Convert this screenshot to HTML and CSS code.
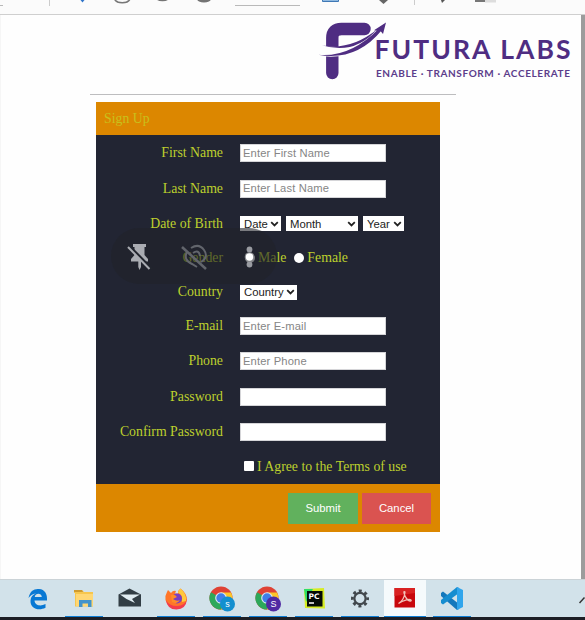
FILE: index.html
```html
<!DOCTYPE html>
<html lang="en">
<head>
<meta charset="utf-8">
<title>Sign Up</title>
<link rel="stylesheet" href="styles.css">
</head>
<body>
<svg width="0" height="0" class="defs" aria-hidden="true">
  <symbol id="chev" viewBox="0 0 9 6"><path d="M1.2 1.2 4.5 4.4 7.8 1.2" fill="none" stroke="#222" stroke-width="1.8"/></symbol>
  <symbol id="chrome" viewBox="0 0 26 26">
    <circle cx="12" cy="12" r="11.5" fill="#df4234"/>
    <path d="M2 6.2A11.5 11.5 0 0 0 12 23.5L17 15 12 12Z" fill="#2da85a"/>
    <path d="M12 6.4H22A11.5 11.5 0 0 1 12 23.5L17 14.5Z" fill="#fcc629"/>
    <circle cx="12" cy="12" r="5.8" fill="#dfe9f3"/><circle cx="12" cy="12" r="4.7" fill="#3f7fe8"/>
  </symbol>
</svg>
<header class="toolbar">
  <svg width="585" height="14" viewBox="0 0 585 14">
    <path d="M0 5.500H3M235 5.500H300" stroke="#b9b9b9"/>
    <path d="M49.500 0V6M414.500 0V5" stroke="#ccc"/>
    <path d="M80.500 0H84.500L82.500 2.500Z" fill="#2f74c9"/>
    <path d="M114.500-1A8 5 0 0 0 130-1" fill="none" stroke="#777" stroke-width="1.500"/>
    <path d="M156-1A7 3.500 0 0 0 169-1ZM197-1A7 3.500 0 0 0 211-1Z" fill="#747474"/>
    <path d="M322.500-1V1.500H338.500V-1" fill="#8fb9e0" stroke="#3f78b5"/>
    <path d="M379 0H388L383.500 4Z" fill="#666"/>
    <path d="M441 0H445L442 3Z" fill="#555"/>
    <path d="M475 0H485V2H475Z" fill="#777"/><path d="M485 0H496V2.500H485Z" fill="#ddd"/>
  </svg>
</header>
<main class="page">
  <div class="paper">
    <svg class="logo" width="270" height="66" viewBox="310 19 270 66" role="img" aria-label="Futura Labs">
      <path d="M332.300 73V38Q332.300 29 341.500 29H364.500" fill="none" stroke="#4f2d82" stroke-width="12.400" stroke-linecap="round"/>
      <path d="M320 44.500Q350 54 378 29L382 31Q356 62 318 55.500Z" fill="#fefefe"/>
      <path d="M322 45.200Q350 51 377 29.500 354 55.500 322 45.200Z" fill="#4f2d82"/>
      <path d="M318 54.800Q350 58 379 28.500L381.500 30.500Q356 61.500 318 54.800Z" fill="#4f2d82"/>
      <path d="M386 22.500 374 30.300 378.500 31 379.500 30 380.500 31 383 34Z" fill="#4f2d82"/>
      <text class="brand" x="374.500" y="59" textLength="196" lengthAdjust="spacing">FUTURA LABS</text>
      <text class="motto" x="376" y="77.300" textLength="194" lengthAdjust="spacing">ENABLE · TRANSFORM · ACCELERATE</text>
    </svg>
    <div class="rule"></div>
    <form class="signup">
      <div class="head">Sign Up</div>
      <div class="fields">
        <label>First Name</label><div><input type="text" placeholder="Enter First Name"></div>
        <label>Last Name</label><div><input type="text" placeholder="Enter Last Name"></div>
        <label>Date of Birth</label>
        <div class="dob">
          <span class="select date">Date<svg><use href="#chev"/></svg></span>
          <span class="select month">Month<svg><use href="#chev"/></svg></span>
          <span class="select year">Year<svg><use href="#chev"/></svg></span>
        </div>
        <label>Gender</label>
        <div class="gender"><i class="radio"></i><span class="male">Male</span><i class="radio"></i><span>Female</span></div>
        <label>Country</label><div><span class="select country">Country<svg><use href="#chev"/></svg></span></div>
        <label>E-mail</label><div><input type="text" placeholder="Enter E-mail"></div>
        <label>Phone</label><div><input type="text" placeholder="Enter Phone"></div>
        <label>Password</label><div><input type="password"></div>
        <label>Confirm Password</label><div><input type="password"></div>
        <span></span><div class="terms"><i class="check"></i><span>I Agree to the Terms of use</span></div>
      </div>
      <div class="actions"><button type="button" class="submit">Submit</button><button type="button" class="cancel">Cancel</button></div>
      <div class="overlay">
        <svg width="166" height="56" viewBox="111 228 166 56">
          <path d="M133 244H146V247H144.500V255L148 259V261.500H141V267L139.500 270 138.300 267V261.500H131V259L134.500 255V247H133Z" fill="#aaacb2"/>
          <path d="M129 245.500 152 269" stroke="#22252e" stroke-width="2.500"/>
          <path d="M128 247 149.500 269" stroke="#aaacb2" stroke-width="2"/>
          <g fill="none" stroke="#62656c" stroke-width="2"><path d="M182 247 206 269" stroke-width="2.500"/><path d="M191 248Q199 243 204 250T201 262M193 253Q199 249 200 256M187 252Q183 260 192 264L197 267"/></g>
          <circle cx="249.500" cy="249.500" r="2.900" fill="#999ba1"/><circle cx="249.500" cy="264.500" r="2.900" fill="#999ba1"/>
          <circle cx="249.500" cy="257" r="4.800" fill="#85878b"/><circle cx="249.500" cy="257" r="3.700" fill="#fff"/>
        </svg>
      </div>
    </form>
  </div>
  <div class="scroll"></div>
</main>
<footer class="taskbar">
  <div class="app"><svg viewBox="0 0 26 26"><path d="M3.500 12C5 5 9 2.500 14 3 20 3.500 22.500 8 22 14.500H9.500C10 20 16 20.500 20.500 18V21.800C13 25.500 5 22 5.500 14.500 5.700 11 8 8.500 11 7.500 7.500 8 5 9.700 3.500 12ZM9.700 11H16.800C16.500 7 10.500 6.500 9.700 11Z" fill="#0878d4"/></svg></div>
  <div class="app open"><svg viewBox="0 0 26 26"><path d="M3 4H11L13 6H22V20.500H4V7H3Z" fill="#f6c64e"/><path d="M3 4H11L12 6H3Z" fill="#cf9b30"/><path d="M5 8H22V20H5Z" fill="#ffd774"/><path d="M8 21V14H20.500V21H17V17.500H11.500V21Z" fill="#4293cb"/></svg></div>
  <div class="app"><svg viewBox="0 0 26 26"><path d="M1.500 8.500 12.500 2.500 24 8.500V20.500H1.500Z" fill="#323e45"/><path d="M3 8.500H23L15 13 18 17 9.500 13Z" fill="#e1edf2"/></svg></div>
  <div class="app open"><svg viewBox="0 0 26 26"><path d="M4 6 5 4 8 7Q10 4 13 5L12 7.500H15Q15 4 17.500 2.500 24 7.500 24 14A11 10 0 0 1 2.500 14Q2 9 4 6Z" fill="#ff7628"/><path d="M3 14Q6 20 14 20T24 13Q23 23.500 13.500 23.500T3 14Z" fill="#f33c4c"/><path d="M17.500 2.500Q24 8 23 15L19 16Q20 8 15 7Q15 4 17.500 2.500Z" fill="#ffc93d"/><circle cx="14" cy="12.500" r="5" fill="#793fc2"/><path d="M8 9Q12 8 14 11L10 13Q14 16 17 14 14 19 9 16Z" fill="#ff8c27"/></svg></div>
  <div class="app open"><svg viewBox="0 0 26 26"><use href="#chrome"/><circle cx="18.500" cy="18" r="7.500" fill="#148fcf"/><text class="badge" x="18.500" y="21">s</text></svg></div>
  <div class="app open"><svg viewBox="0 0 26 26"><use href="#chrome"/><circle cx="18.500" cy="18" r="7.500" fill="#502aa3"/><text class="badge" x="18.500" y="21.200">S</text></svg></div>
  <div class="app open"><svg viewBox="0 0 26 26"><path d="M3 3 23 2 24 22.500 4 22Z" fill="#d7ec24"/><path d="M3 3 12 3 5 16Z" fill="#2cdf68"/><path d="M6 5H21.500V20.500H6Z" fill="#050b08"/><text class="pc" x="7.500" y="12.500">PC</text><path d="M8 17H13" stroke="#fff" stroke-width="1.500"/></svg></div>
  <div class="app open"><svg viewBox="0 0 26 26"><g fill="none" stroke="#42484d"><circle cx="13" cy="12.500" r="5.600" stroke-width="2.200"/><circle cx="13" cy="12.500" r="7.600" stroke-width="2.800" stroke-dasharray="3 2.970" stroke-dashoffset="1.500"/></g></svg></div>
  <div class="app open active"><svg viewBox="0 0 26 26"><path d="M2.500 2H23V21.500H2.500Z" fill="#c8070c"/><path d="M2.500 2H23V7L2.500 10Z" fill="#d92222"/><path d="M6.500 17.500C10 15.500 12.500 11 13 6 11 4 12 9 14.500 12.500 17 16 20 15.500 19 14 17 12.500 11 14.500 6.500 17.500Z" fill="none" stroke="#f2c2b8" stroke-width="1.300"/></svg></div>
  <div class="app open"><svg viewBox="0 0 26 26"><path d="M2 7 4 5.500 20 18V23L18 24 2 10Z" fill="#1478bc"/><path d="M2 17 4 18.500 20 7V2L18 1 2 14Z" fill="#168dd0"/><path d="M18 1 24 4V21L18 24Z" fill="#30a5ec"/></svg></div>
  <svg class="tray" width="6" height="9" viewBox="0 0 6 9"><path d="M.5 7 5.500 1.500" stroke="#333" stroke-width="1.500"/></svg>
</footer>
<div class="bezel"></div>
</body>
</html>
```

FILE: styles.css
```css
* { box-sizing: border-box; }
body { margin: 0; width: 585px; height: 620px; overflow: hidden; display: flex; flex-direction: column; background: #fff; font-family: "Liberation Sans", Arial, sans-serif; }
.defs { display: none; }
.toolbar { height: 15px; background: #fbfbfb; border-bottom: 1px solid #cfcfcf; }
.toolbar svg { display: block; }
.page { height: 564px; display: flex; }
.paper { flex: 1; background: #fefefe; border-left: 1px solid #f6f6f6; padding: 4px 0 0 89px; }
.scroll { width: 4px; background: #9c9c9c; }
.logo { display: block; margin-left: 220px; }
.brand { font: 700 26.5px Lato, sans-serif; fill: #4f2d82; }
.motto { font: 700 10px Lato, sans-serif; fill: #5c3d8b; }
.rule { width: 366px; height: 1px; margin-top: 9px; background: #bdbdbf; }
.signup { position: relative; width: 344px; margin: 7px 0 0 6px; font-family: "Liberation Serif", "Times New Roman", serif; font-size: 13.8px; color: #bdd02d; }
.head { height: 33px; padding: 0 8px; line-height: 34px; background: #dc8700; color: #c9c01c; }
.fields { display: grid; grid-template-columns: 127px 1fr; column-gap: 17px; grid-template-rows: 36px 35px 35px 34px 34px 34px 36px 35px 36px 34px; align-items: center; background: #222533; }
.fields label { text-align: right; white-space: nowrap; }
.fields > div { display: flex; align-items: center; }
input { width: 146px; height: 18px; padding: 0 2px 1px; border: 1px solid #d5d5d8; background: #fff; font: 11.2px "Liberation Sans", Arial, sans-serif; letter-spacing: .15px; }
input::placeholder { color: #858585; }
.select { display: flex; align-items: center; justify-content: space-between; height: 15px; padding: 0 2px 0 4px; background: #fff; color: #222; font: 11.3px "Liberation Sans", Arial, sans-serif; }
.select svg { width: 9px; height: 6px; flex: none; }
.dob { gap: 5px; }
.date { width: 41px; }
.month { width: 72px; }
.year { width: 41px; }
.country { width: 57px; }
.radio { width: 10px; height: 10px; border-radius: 50%; background: #fff; }
.gender { padding-left: 5px; gap: 3px; }
.male { margin-right: 5px; }
.terms { padding-left: 4px; gap: 3px; white-space: nowrap; }
.check { width: 10px; height: 10px; border-radius: 1px; background: #fff; margin-bottom: 3px; }
.actions { height: 48px; display: flex; justify-content: flex-end; align-items: center; gap: 4px; padding-right: 9px; background: #dc8700; }
button { width: 70px; height: 31px; padding: 0; border: 0; color: #fff; font: 11.3px "Liberation Sans", Arial, sans-serif; }
.submit { background: #61b15d; }
.cancel { width: 69px; background: #da5350; }
.overlay { position: absolute; left: 15px; top: 126px; width: 166px; height: 56px; border-radius: 28px; background: rgba(33, 35, 41, .6); }
.overlay svg { display: block; }
.taskbar { height: 38px; display: flex; align-items: stretch; padding-left: 15px; background: #d2e2ea; border-top: 1px solid #cbd3d7; }
.app { width: 46px; display: flex; flex: none; align-items: center; justify-content: center; }
.app svg { width: 26px; height: 26px; }
.open { background: linear-gradient(#0d7dd4, #0d7dd4) center bottom / 38px 1px no-repeat; }
.active { width: 42px; margin: 0 3px 0 1px; background: linear-gradient(#0d7dd4, #0d7dd4) center bottom / 42px 1px no-repeat #f5fafc; }
.badge { fill: #fff; font: 9px "Liberation Sans", sans-serif; text-anchor: middle; }
.pc { fill: #fff; font: 700 7.5px "DejaVu Sans", sans-serif; }
.tray { margin: 16px 0 0 auto; flex: none; }
.bezel { height: 3px; background: #1c1e25; }
```
